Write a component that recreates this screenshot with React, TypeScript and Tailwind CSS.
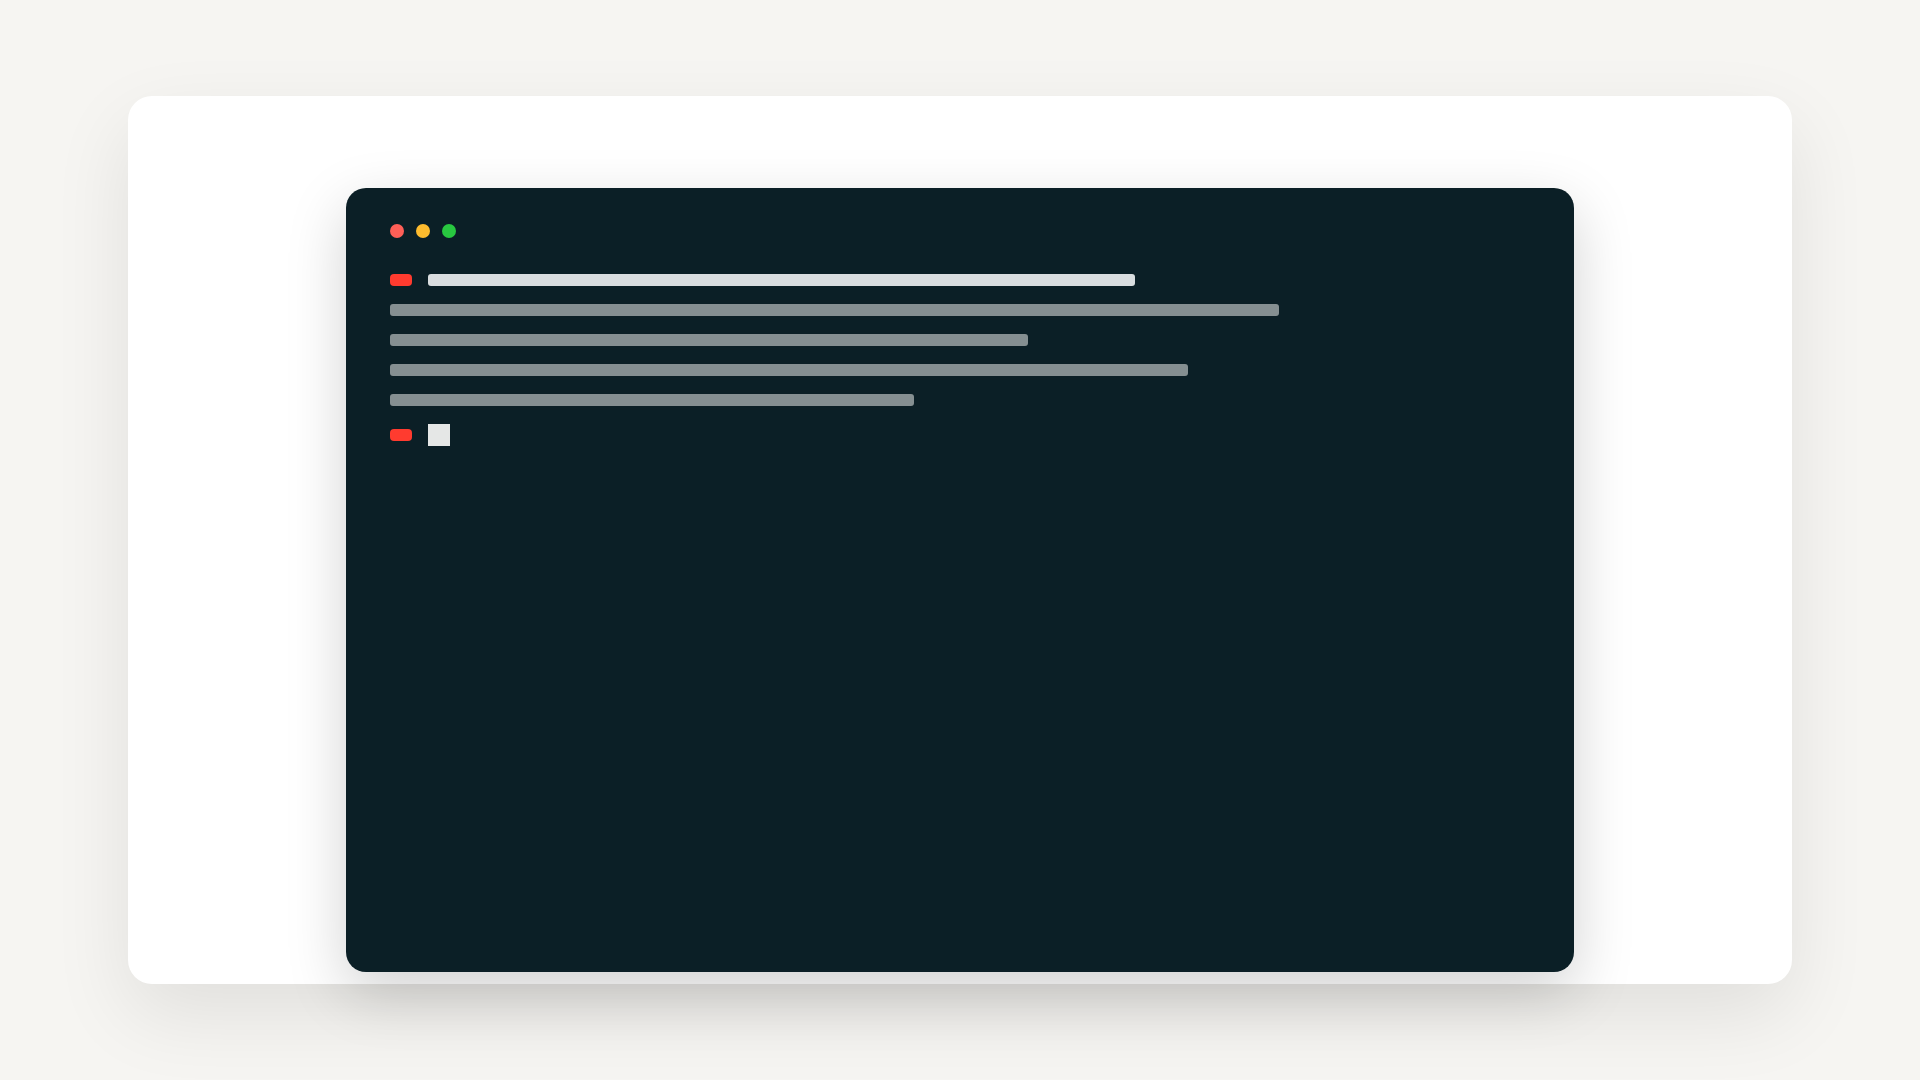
export default function App() {
  return (
    <div className="min-h-screen w-full bg-[#f6f5f2] pt-[96px] font-['Inter',sans-serif]">
      <div className="mx-auto h-[888px] w-[1664px] rounded-[24px] bg-white pt-[92px] shadow-[0_30px_80px_rgba(0,0,0,0.09)]">
        <div className="mx-auto h-[784px] w-[1228px] rounded-[20px] bg-[#0b1f26] px-[44px] pt-[36px] shadow-[0_20px_60px_rgba(0,0,0,0.18)]">
          <div className="flex items-center gap-[12px]">
            <span className="h-[14px] w-[14px] rounded-full bg-[#ff5f57]" />
            <span className="h-[14px] w-[14px] rounded-full bg-[#febc2e]" />
            <span className="h-[14px] w-[14px] rounded-full bg-[#28c840]" />
          </div>

          <div className="mt-[36px] flex flex-col gap-[18px]">
            <div className="flex items-center gap-[16px]">
              <span className="h-[12px] w-[22px] rounded-[4px] bg-[#ff3b2f]" />
              <span className="h-[12px] w-[707px] rounded-[3px] bg-[#d9dddf]" />
            </div>
            <span className="h-[12px] w-[889px] rounded-[3px] bg-[#858f91]" />
            <span className="h-[12px] w-[638px] rounded-[3px] bg-[#858f91]" />
            <span className="h-[12px] w-[798px] rounded-[3px] bg-[#858f91]" />
            <span className="h-[12px] w-[524px] rounded-[3px] bg-[#858f91]" />
            <div className="flex items-center gap-[16px]">
              <span className="h-[12px] w-[22px] rounded-[4px] bg-[#ff3b2f]" />
              <span className="h-[22px] w-[22px] bg-[#e5e7e6]" />
            </div>
          </div>
        </div>
      </div>
    </div>
  );
}
